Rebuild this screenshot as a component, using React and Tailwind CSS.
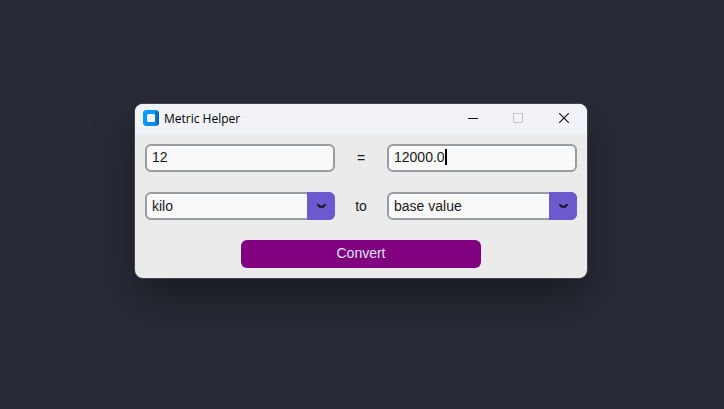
import { useState } from "react";

const PREFIXES = ["giga", "mega", "kilo", "base value", "centi", "milli", "micro"];
const FACTORS = {
  giga: 1e9,
  mega: 1e6,
  kilo: 1e3,
  "base value": 1,
  centi: 1e-2,
  milli: 1e-3,
  micro: 1e-6,
};

function AppIcon() {
  return (
    <svg className="size-4 shrink-0" viewBox="0 0 16 16" aria-hidden="true">
      <defs>
        <linearGradient id="side" x1="0" y1="0" x2="1" y2="0">
          <stop offset="0" stopColor="#0a7fd4" />
          <stop offset="1" stopColor="#0560b0" />
        </linearGradient>
      </defs>
      <rect width="16" height="16" rx="3.5" fill="#0a9bff" />
      <path d="M12 4 13 .4Q16 1 16 3.500v9q0 2.600-3 3.100L12 12z" fill="url(#side)" />
      <path d="M4 12h8l1 3.600q-.4.400-1 .4H3.500q-1 0-1.800-.5z" fill="#0790ee" />
      <rect x="4" y="4" width="8" height="8" rx="1.500" fill="#f3f5fc" />
    </svg>
  );
}

function TitleBar() {
  return (
    <header className="flex h-[30px] items-start justify-between bg-[#f1f3f9] pl-2">
      <div className="flex h-7 items-center gap-[5px]">
        <AppIcon />
        <h1 className="pt-0.5 font-['Open_Sans',sans-serif] text-xs leading-4 text-black">Metric Helper</h1>
      </div>
      <div className="flex h-7">
        <button type="button" aria-label="Minimize" className="flex w-11 items-center justify-center">
          <svg width="10" height="10" viewBox="0 0 10 10">
            <path d="M0 5.500h10" stroke="#111" />
          </svg>
        </button>
        <button type="button" aria-label="Maximize" disabled className="flex w-[46px] items-center justify-center">
          <svg width="10" height="10" viewBox="0 0 10 10">
            <rect x="0.500" y="0.500" width="9" height="9" rx="0.500" fill="none" stroke="#c2c4ca" />
          </svg>
        </button>
        <button type="button" aria-label="Close" className="flex w-[46px] items-center justify-center">
          <svg width="10" height="10" viewBox="0 0 10 10">
            <path d="M0 0l10 10M10 0L0 10" stroke="#111" strokeWidth="1.100" />
          </svg>
        </button>
      </div>
    </header>
  );
}

function Entry({ label, value, onChange, active }) {
  return (
    <div className="relative">
      <input
        aria-label={label}
        value={value}
        onChange={(e) => onChange(e.target.value)}
        className="block h-7 w-full rounded-md border-2 border-[#979da2] bg-[#f9f9fa] px-[5px] pb-0.5 text-sm leading-4 text-[#1a1a1a] outline-none"
      />
      {active && <span className="absolute top-[5px] left-[58px] h-4 w-0.5 bg-black" />}
    </div>
  );
}

function UnitSelect({ label, value, onChange }) {
  return (
    <div className="relative">
      <select
        aria-label={label}
        value={value}
        onChange={(e) => onChange(e.target.value)}
        className="block h-7 w-full appearance-none rounded-md border-2 border-[#979da2] bg-[#f9f9fa] pr-8 pl-[5px] text-sm leading-4 text-[#1a1a1a] outline-none"
      >
        {PREFIXES.map((name) => (
          <option key={name}>{name}</option>
        ))}
      </select>
      <span className="pointer-events-none absolute inset-y-0 right-0 flex w-7 items-center justify-center rounded-r-md bg-[#6a5acd]">
        <svg width="12" height="6" viewBox="0 0 12 6" aria-hidden="true">
          <path
            d="M2 1.200Q2.400.4 3.300.9L6.500 3.100 9.700.9Q10.600.4 11 1.200 11.200 1.800 10.600 2.400L8.500 4.700Q7.500 5.200 6.500 4.300 5.500 5.200 4.500 4.700L2.400 2.400Q1.800 1.800 2 1.200Z"
            fill="#17141f"
          />
        </svg>
      </span>
    </div>
  );
}

export default function App() {
  const [amount, setAmount] = useState("12");
  const [result, setResult] = useState("12000.0");
  const [from, setFrom] = useState("kilo");
  const [to, setTo] = useState("base value");

  const convert = (e) => {
    e.preventDefault();
    const n = (Number(amount) * FACTORS[from]) / FACTORS[to];
    setResult(Number.isInteger(n) ? n.toFixed(1) : String(n));
  };

  return (
    <main className="flex min-h-screen items-start justify-center bg-[#282a36] pt-[104px] pr-0.5 font-['Liberation_Sans',Arial,sans-serif]">
      <section className="w-full max-w-[452px] overflow-hidden rounded-lg bg-[#ebebeb] shadow-[0_0_0_1px_#44444c,0_20px_40px_rgba(0,0,0,0.36)]">
        <TitleBar />
        <form onSubmit={convert} className="flex flex-col items-center gap-5 p-2.5">
          <div className="grid w-full grid-cols-[1fr_52px_1fr] items-center gap-y-5 text-center text-sm leading-4 text-[#1a1a1a]">
            <Entry label="Value" value={amount} onChange={setAmount} />
            <span>=</span>
            <Entry label="Result" value={result} onChange={setResult} active />
            <UnitSelect label="From unit" value={from} onChange={setFrom} />
            <span>to</span>
            <UnitSelect label="To unit" value={to} onChange={setTo} />
          </div>
          <button type="submit" className="h-7 w-60 rounded-md bg-[#800080] pb-0.5 text-sm leading-4 text-[#dce4ee]">
            Convert
          </button>
        </form>
      </section>
    </main>
  );
}
